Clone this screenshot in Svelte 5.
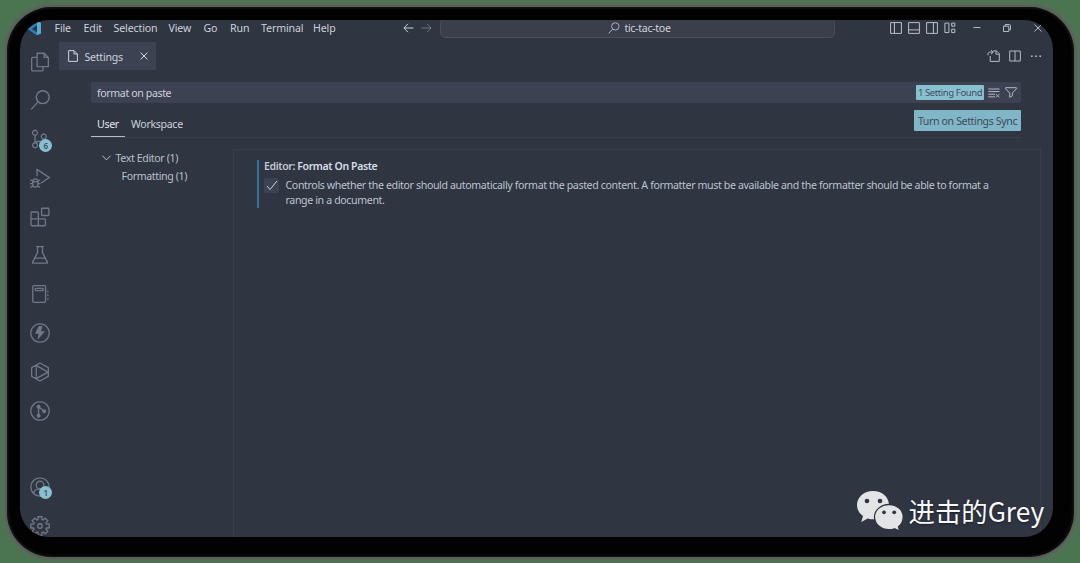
<script>
  const menus = [
    { label: 'File', w: 29 },
    { label: 'Edit', w: 30 },
    { label: 'Selection', w: 55 },
    { label: 'View', w: 35 },
    { label: 'Go', w: 26.5 },
    { label: 'Run', w: 31 },
    { label: 'Terminal', w: 52 },
    { label: 'Help', w: 30 },
  ];

  // Stroked outlines on a 24 unit grid, with filled parts listed apart.
  const activities = [
    { name: 'explorer', d: 'M8.5 1.5H17l5 5V17.5H8.5ZM17 1.5V6.5H22M8.5 6.5H3.2Q2 6.5 2 7.7V21.5Q2 22.7 3.2 22.7H14.5Q15.7 22.7 15.7 21.5V17.5' },
    { name: 'search', d: 'M15.3 .9a7.7 7.7 0 1 0 .01 0ZM9.8 14 1.5 23.2' },
    { name: 'source', d: 'M6 1.5a3 3 0 1 0 .01 0ZM6 16.5a3 3 0 1 0 .01 0ZM16.5 6a3 3 0 1 0 .01 0ZM6 7.5V16.5M16.5 12Q16 15 12 15H9Q6.5 15 6 16.5', badge: '6' },
    { name: 'debug', d: 'M8.5 10V1.7L23.2 11.5 13.3 18M3.2 17Q3.2 13 6.3 13T9.4 17V19.5Q9.4 23 6.3 23T3.2 19.5ZM3.2 16.5H9.4M.5 14 3.2 16M12.1 14 9.4 16M0 18.7H3.2M9.4 18.7H12.6M.5 23.5 3.6 21.2M12.1 23.5 9 21.2' },
    { name: 'extensions', d: 'M2.2 6H8.8Q10 6 10 7.2V22.5H2.4Q1.2 22.5 1.2 21.3V7Q1.2 6 2.2 6ZM1.2 14.2H17.3Q18.5 14.2 18.5 15.4V21.3Q18.5 22.5 17.3 22.5H10M14.8 1.5H21.8Q22.7 1.5 22.7 2.4V9.3Q22.7 10.2 21.8 10.2H14.8Q13.9 10.2 13.9 9.3V2.4Q13.9 1.5 14.8 1.5Z' },
    { name: 'testing', d: 'M7.5 2H16.5M9 2V9L3.2 20.5Q2.8 21.8 4 21.8H20Q21.2 21.8 20.8 20.5L15 9V2M6 15.8H18' },
    { name: 'notebook', d: 'M4.8 2H17.2Q18.7 2 18.7 3.5V20.5Q18.7 22 17.2 22H4.8Q3.3 22 3.3 20.5V3.5Q3.3 2 4.8 2ZM7 5.3H15Q15.7 5.3 15.7 6V7.2Q15.7 8 15 8H7Q6.3 8 6.3 7.2V6Q6.3 5.3 7 5.3ZM21.5 8V10M21.5 12.5V14.5M21.5 17V19' },
    { name: 'thunder', d: 'M12 1a11 11 0 1 0 .01 0Z', f: 'M10.5 3.5 6 13H10.2L9 20.5 18 9.8H13.3L15 3.5Z' },
    { name: 'hexagon', d: 'M12 1.2 22 6.8V17.2L12 22.8 2 17.2V6.8ZM7.5 4V20L21.5 12.2 7.5 4' },
    { name: 'graph', d: 'M12 1a11 11 0 1 0 .01 0ZM10.3 7V17.5M10.3 7 16.5 12', f: 'M10.3 4.5a2.4 2.4 0 1 0 .01 0ZM10.3 15.2a2.4 2.4 0 1 0 .01 0ZM17 10a2.3 2.3 0 1 0 .01 0Z' },
  ];

  const cogPoints = Array.from({ length: 8 }, (_, i) =>
    [[-0.3, 8.1], [-0.2, 11.3], [0.2, 11.3], [0.3, 8.1]]
      .map(([a, r]) => {
        const t = (i * Math.PI) / 4 + a;
        return `${(12 + r * Math.sin(t)).toFixed(2)},${(12 - r * Math.cos(t)).toFixed(2)}`;
      })
      .join(' ')
  ).join(' ');
</script>

<div class="stage">
  <div class="bezel">
    <div class="window">
      <header class="titlebar">
        <svg class="logo" width="15" height="15" viewBox="0 0 15 15">
          <path d="M10 0V4.200L4.800 8 10 11.300V14.500L1 8.500 0 7.600Z" fill="#2a7fb3" />
          <path d="M10 0 14 1.7V12.5L10 14.3Z" fill="#58a9d3" />
        </svg>
        <nav>
          {#each menus as m}<span class="menu-item" style="width:{m.w}px">{m.label}</span>{/each}
        </nav>
        <div class="history">
          <svg width="11" height="10" viewBox="0 0 11 10"><path d="M10.5 5H1M5 .8.9 5 5 9.2" /></svg>
          <svg class="dim" width="11" height="10" viewBox="0 0 11 10"><path d="M.5 5H10M6 .8 10.1 5 6 9.2" /></svg>
        </div>
        <div class="command">
          <svg width="12" height="12" viewBox="0 0 12 12"><circle cx="7.3" cy="4.4" r="3.7" /><path d="M4.7 7.1.7 11.4" /></svg>
          <span>tic-tac-toe</span>
        </div>
        <div class="layouts">
          <svg width="12" height="12" viewBox="0 0 12 12"><path d="M.6.6H11.4V11.4H.6ZM4.4.6V11.4" /></svg>
          <svg width="12" height="12" viewBox="0 0 12 12"><path d="M.6.6H11.4V11.4H.6ZM.6 7.9H11.4" /></svg>
          <svg width="12" height="12" viewBox="0 0 12 12"><path d="M.6.6H11.4V11.4H.6ZM7.4.6V11.4" /></svg>
          <svg width="12" height="12" viewBox="0 0 12 12"><path d="M.9 1.1H4.9V10.6H.9ZM7.7 1.1H10.8V4.2H7.7ZM7.7 7.2H10.8V10.6H7.7Z" /></svg>
        </div>
        <div class="controls">
          <svg width="8" height="8" viewBox="0 0 8 8"><path d="M.5 3.5H7.5" /></svg>
          <svg width="8" height="8" viewBox="0 0 8 8"><path d="M.5 2.2H5.8V7.5H.5ZM2.2 2V.5H6.3Q7.5.5 7.5 1.7V5.8H6" /></svg>
          <svg width="8" height="8" viewBox="0 0 8 8"><path d="M.5.5 7.5 7.5M7.5.5.5 7.5" /></svg>
        </div>
      </header>

      <aside class="activity">
        {#each activities as a}
          <div class="act">
            <svg width="20" height="20" viewBox="0 0 24 24">
              <path d={a.d} />
              {#if a.f}<path class="solid" d={a.f} />{/if}
            </svg>
            {#if a.badge}<b>{a.badge}</b>{/if}
          </div>
        {/each}
        <div class="act account">
          <svg width="20" height="20" viewBox="0 0 24 24"><circle cx="12" cy="12" r="11" /><circle cx="12" cy="9.7" r="4.6" /><path d="M4.3 19.8Q5.5 14.5 12 14.3T19.7 19.8" /></svg>
          <b>1</b>
        </div>
        <div class="act">
          <svg width="20" height="20" viewBox="0 0 24 24"><polygon points={cogPoints} /><circle cx="12" cy="12" r="2.7" /></svg>
        </div>
      </aside>

      <main>
        <div class="tabs">
          <div class="tab">
            <svg width="10" height="12" viewBox="0 0 10 12"><path d="M.6.6H6L9.4 4V11.4H.6ZM6 .6V4H9.4" /></svg>
            <span>Settings</span>
            <svg class="close" width="8" height="8" viewBox="0 0 8 8"><path d="M.5.5 7.5 7.5M7.5.5.5 7.5" /></svg>
          </div>
          <div class="actions">
            <svg width="13" height="12" viewBox="0 0 13 12"><path d="M3.2 6V11.4H12.3V3.7L9.5.9H6.2M9 .9V4.2H12.3M1 5.2Q.3 2 4 2H6M4 .2 6.2 2.2 4 4.2" /></svg>
            <svg width="12" height="12" viewBox="0 0 12 12"><path d="M.7 1H11.3V11H.7ZM6 1V11" /></svg>
            <svg width="12" height="12" viewBox="0 0 12 12"><path class="solid" d="M1 5.4h1.7v1.7h-1.7ZM5.2 5.4h1.7v1.7H5.2ZM9.4 5.4h1.7v1.7h-1.7Z" /></svg>
          </div>
        </div>

        <div class="settings">
          <div class="search">
            <span class="query">format on paste</span>
            <span class="found">1 Setting Found</span>
            <svg width="12" height="10" viewBox="0 0 12 10"><path d="M.3 1H11.5M.3 3.6H11.5M.3 6.2H7M.3 8.8H7M8 6.2 11.2 9.4M11.2 6.2 8 9.4" /></svg>
            <svg width="12" height="11" viewBox="0 0 12 11"><path d="M.6.7H11.4V1.8L7.4 6V8.8L4.7 10.3V6L.6 1.8Z" /></svg>
          </div>
          <div class="scopes">
            <span class="scope active">User</span>
            <span class="scope">Workspace</span>
            <button>Turn on Settings Sync</button>
          </div>
          <div class="body">
            <div class="toc">
              <div class="toc-row">
                <svg width="9" height="6" viewBox="0 0 9 6"><path d="M.5.7 4.5 4.9 8.5.7" /></svg>
                <span>Text Editor (1)</span>
              </div>
              <div class="toc-row child"><span>Formatting (1)</span></div>
            </div>
            <div class="results">
              <section>
                <h3><span>Editor:</span> Format On Paste</h3>
                <div class="option">
                  <i><svg width="12" height="11" viewBox="0 0 12 11"><path d="M1 6 4 9.5 11 1" /></svg></i>
                  <p>Controls whether the editor should automatically format the pasted content. A formatter must be available and the formatter should be able to format a<br />range in a document.</p>
                </div>
              </section>
            </div>
          </div>
        </div>
      </main>
    </div>
  </div>

  <div class="watermark">
    <svg width="48" height="42" viewBox="0 0 48 42">
      <path d="M17 1C8 1 1 7.2 1 15c0 4.7 2.2 8.4 6 11L5.3 32 11.7 28.4Q14.5 29.3 18 29.3C26 29 33 23 33 15S26 1 17 1Z" fill="#e3e4e6" />
      <path d="M33 14.5C25.2 14.5 18.500 20 18.500 27S25 39.7 33 39.7Q36 39.7 38.5 38.8L43.6 41 42.5 36.8C45.5 34.5 47.2 31 47.2 27 47.2 20 41 14.5 33 14.5Z" fill="#e3e4e6" stroke="#2f3541" stroke-width="1.3" />
      <g fill="#2f3541"><circle cx="11" cy="11" r="2.3" /><circle cx="24" cy="11" r="2.3" /><circle cx="28" cy="22.3" r="1.9" /><circle cx="38.2" cy="22.3" r="1.9" /></g>
    </svg>
    <span>进击的Grey</span>
  </div>
</div>

<style>
  :global(body) { background: #4b7551; overflow: hidden; }
  .stage {
    position: relative; box-sizing: border-box; width: 1080px; height: 563px; padding: 7px 6px 6px 7px;
    background: #4b7551; overflow: hidden;
    font: 10.6px/14px "Noto Sans", sans-serif; color: #cbd1dc;
  }
  .stage * { box-sizing: border-box; }
  svg { display: block; flex: none; overflow: visible; fill: none; stroke: currentColor; stroke-width: 1; }
  .solid { fill: currentColor; stroke: none; }
  span { white-space: nowrap; }
  .bezel {
    height: 550px; padding: 13px 20px 13px 13px; border-radius: 45px; background: #020202;
    box-shadow: inset 0 0 3px 1px #1c1c1c, 0 0 2px 2px #5a5d5a, 0 0 5px 4px #62696299;
  }
  .window {
    width: 1033px; height: 516.5px; border-radius: 29px; overflow: hidden; background: #2f3541;
    display: grid; grid-template: 22px 1fr / 39px 1fr;
  }
  .titlebar { grid-column: 1 / 3; display: flex; height: 16px; align-items: center; padding-left: 6.5px; }
  .logo { stroke: none; }
  nav { display: flex; margin: -1px 0 0 13px; width: 289px; letter-spacing: -.12px; }
  .menu-item { flex: none; }
  .history { display: flex; gap: 7px; margin-left: 59.5px; }
  .dim { opacity: .4; }
  .command {
    display: flex; justify-content: center; gap: 4px; width: 395px; height: 20px; margin: 0 0 0 7.5px;
    padding: 0 0 1px 0; align-items: center; border: 1px solid #484d5a; border-radius: 5px; background: #3b3f4b; letter-spacing: -.3px;
  }
  .command span { margin-right: -5px; }
  .command svg { color: #a9afba; }
  .layouts { display: flex; gap: 6px; margin-left: 55.5px; color: #b9bfca; }
  .controls { display: flex; gap: 22.5px; margin-left: 16.5px; color: #b4bac5; }
  .activity { color: #707887; display: flex; flex-direction: column; }
  .act { position: relative; height: 38.8px; flex: none; padding: 9.5px 0 0 9.5px; }
  .act svg { stroke-width: 1.6; }
  .act b {
    position: absolute; left: 19.3px; top: 19px; width: 13px; height: 13px; border-radius: 50%;
    background: #88c0d0; color: #3c4a58; font-size: 8px; line-height: 13px; text-align: center; font-weight: 600;
  }
  .account { margin-top: 37.5px; }
  main { min-width: 0; }
  .tabs { display: flex; justify-content: space-between; height: 28px; }
  .tab { display: flex; align-items: center; width: 97px; padding: 0 8px 0 9px; background: #3b4252; letter-spacing: -.25px; }
  .tab span { width: 55px; margin: 1px 0 0 6.5px; }
  .tab .close { color: #d2d7e0; }
  .actions { display: flex; align-items: center; gap: 9px; padding-right: 11.5px; color: #b6bcc7; }
  .settings { padding: 12px 12px 0 32px; }
  .search { display: flex; align-items: center; width: 930px; height: 21px; padding: 0 4.5px 0 6px; background: #3c4252; border-radius: 1px; }
  .query { flex: 1; letter-spacing: -.38px; }
  .found { width: 68px; height: 15px; margin-right: 4px; border-radius: 1px; background: #88c0d0; color: #40505f; font-size: 9.5px; line-height: 15px; text-align: center; letter-spacing: -.4px; }
  .search svg { margin-right: 4.5px; color: #b2b8c3; }
  .search svg:last-child { margin-right: 0; }
  .scopes { display: flex; width: 930px; height: 35px; border-bottom: 1px solid #383e4b; }
  .scope { height: 34px; padding: 14px 6px 0; letter-spacing: -.32px; }
  .scope.active { width: 34px; border-bottom: 1px solid #b5bbc6; color: #e1e6ee; }
  button {
    width: 107px; height: 21px; margin: 7px 0 0 auto; padding: 0; border: 0; border-radius: 1px;
    background: #81b6c7; color: #3c4b59; font: inherit; letter-spacing: -.38px; white-space: nowrap;
  }
  .body { display: flex; padding-top: 11px; }
  .toc { width: 142px; color: #bac0cc; letter-spacing: -.37px; }
  .toc-row { display: flex; align-items: center; gap: 5px; height: 18px; padding-left: 10.5px; }
  .toc-row.child { padding-left: 30.5px; }
  .results { width: 808px; height: 400px; padding: 11px 0 0 23px; border: 1px solid #383e4b; }
  section { width: 760px; height: 48px; border-left: 2px solid #2e779b; padding-left: 5px; }
  h3 { margin: -1px 0 0; font-size: 10.5px; line-height: 12px; font-weight: 600; color: #d8dee9; letter-spacing: -.38px; white-space: nowrap; }
  h3 span { color: #c1c7d2; }
  .option { display: flex; gap: 6.5px; margin-top: 5px; }
  i { width: 15px; height: 15px; margin-top: 1px; padding: 2px 1.5px; border-radius: 2px; background: #3b4252; flex: none; }
  p { margin: 1px 0 0; line-height: 14.5px; white-space: nowrap; color: #bdc3cf; letter-spacing: -.362px; }
  .watermark { position: absolute; left: 856px; top: 490px; display: flex; color: #f8f8f8; }
  .watermark svg { stroke: none; }
  .watermark span { margin: 0 0 0 4.5px; font: 26.4px/42px "Noto Sans CJK SC", sans-serif; font-weight: 400; text-shadow: 0 1px 2px #1a1e26; }
</style>
